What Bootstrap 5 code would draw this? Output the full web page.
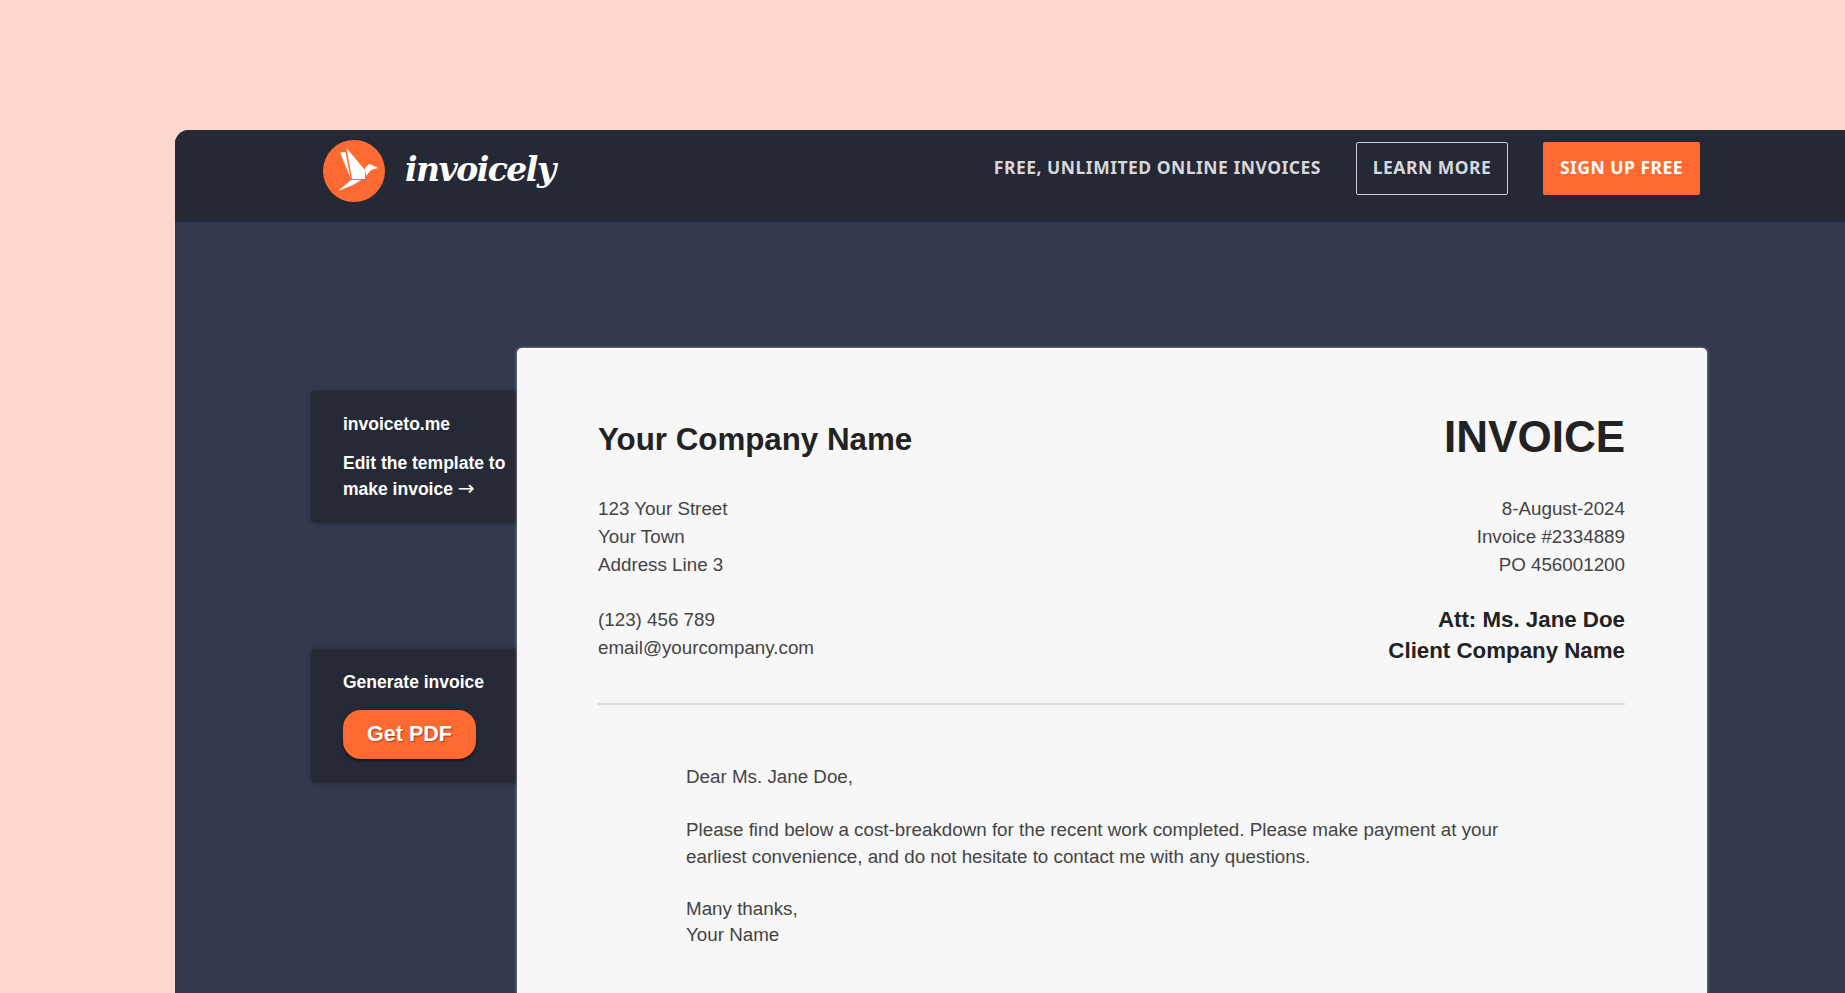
<!doctype html>
<html lang="en"><head><meta charset="utf-8"><title>Invoicely</title>
<link href="https://cdn.jsdelivr.net/npm/bootstrap@5.3.0/dist/css/bootstrap.min.css" rel="stylesheet">
<style>
html,body{height:100%;overflow:hidden}
body{background:#ffd7cc;font-family:"Liberation Sans",Arial,sans-serif;padding:130px 0 0 175px}
.win{background:#343a4d;height:863px;border-radius:14px 0 0 0;overflow:hidden}
.topbar{background:#252936;height:92px;flex:0 0 92px;padding:0 145px 10px 148px}
.brand-text{font-family:"DejaVu Serif",serif;font-style:italic;font-weight:700;font-size:33px;letter-spacing:-1.5px;color:#fff;line-height:1;margin-left:20px;margin-top:-4px}
.navgrp{margin-bottom:6px}
.navtxt,.navbtn{font-family:"Noto Sans",sans-serif;font-weight:700;font-size:17.5px;line-height:1;letter-spacing:.5px}
.navtxt{color:#d6d8dc}
.navbtn{height:53px;display:flex;align-items:center;justify-content:center;border-radius:2px}
.b-learn{width:152px;border:1px solid #c9ccd2;color:#d6d8dc;margin-left:35px}
.b-sign{width:157px;background:#ff6a32;color:#fff;margin-left:35px}
.stage{padding:126px 0 0 136px;flex:1 1 auto;min-height:0}
.side{width:206px;flex:0 0 206px;padding-top:43px;gap:126px}
.sidecard{background:#262a37;border-radius:5px 0 0 5px;box-shadow:0 0 4px rgba(20,22,30,.55);padding:20px 8px 0 32px;color:#fff;font-weight:700;font-size:17.5px;width:206px}
.c1{height:132px}.c2{height:134px}
.sidecard p{margin:0;line-height:26px}
.sidecard .gap1{margin-bottom:13px}
.arw{font-family:"DejaVu Sans",sans-serif;font-weight:400;font-size:20px;line-height:1}
.pdf{display:block;background:#ff6a32;color:#fff;border:0;border-radius:18px;width:133px;height:49px;font-family:"Liberation Sans",Arial,sans-serif;font-weight:700;font-size:21.5px;margin-top:15px;box-shadow:0 2px 3px rgba(0,0,0,.5);text-shadow:1px 1px 1px rgba(80,40,20,.6);padding:0}
.paper{width:1190px;flex:0 0 1190px;background:#f7f7f7;border-radius:5px 5px 0 0;box-shadow:0 0 3px rgba(255,255,255,.55);padding:64px 82px 0 81px;color:#444;font-size:18.8px}
.cname{font-size:31.3px;font-weight:700;color:#222;line-height:36px;margin:10px 0 37px}
.inv{font-size:44px;font-weight:700;color:#222;line-height:50px;margin:0 0 33px}
.ln{line-height:28px}
.ln2{margin-top:27px}
.att{font-size:22.3px;font-weight:700;color:#222;line-height:31px;margin-top:25px}
.rule{border-top:2px solid #dcdcdc;margin:37px 0 58px;opacity:1}
.letter{padding-left:88px;width:940px}
.letter p{margin:0;line-height:27px}
.letter .sp{margin-bottom:26px}
.letter .sgn{line-height:26px}
</style></head><body>
<div class="win d-flex flex-column">
<div class="topbar d-flex align-items-center">
 <svg width="62" height="62" viewBox="0 0 62 62" aria-label="Invoicely logo" class="flex-shrink-0"><circle cx="31" cy="31" r="31" fill="#ff6a32"/><path fill="#fff" d="M17 12.5 22.5 12 27.5 38Z M23.5 8 42 30 42 39 29 39Z M28 40 38 40 30 45 15 51Z M42 28 46 24 49 25 55 28 48 30 43 36Z"/></svg>
 <span class="brand-text">invoicely</span>
 <div class="navgrp d-flex align-items-center ms-auto">
  <span class="navtxt">FREE, UNLIMITED ONLINE INVOICES</span>
  <a class="navbtn b-learn text-decoration-none">LEARN MORE</a>
  <a class="navbtn b-sign text-decoration-none">SIGN UP FREE</a>
 </div>
</div>
<div class="stage d-flex">
 <div class="side d-flex flex-column">
  <div class="sidecard c1"><p class="gap1">invoiceto.me</p><p>Edit the template to make invoice <span class="arw">→</span></p></div>
  <div class="sidecard c2"><p>Generate invoice</p><button class="pdf">Get PDF</button></div>
 </div>
 <div class="paper">
  <div class="d-flex justify-content-between">
   <div>
    <h2 class="cname">Your Company Name</h2>
    <div class="ln">123 Your Street<br>Your Town<br>Address Line 3</div>
    <div class="ln ln2">(123) 456 789<br>email@yourcompany.com</div>
   </div>
   <div class="text-end">
    <h1 class="inv">INVOICE</h1>
    <div class="ln">8-August-2024<br>Invoice #2334889<br>PO 456001200</div>
    <div class="att">Att: Ms. Jane Doe<br>Client Company Name</div>
   </div>
  </div>
  <hr class="rule">
  <div class="letter">
   <p class="sp">Dear Ms. Jane Doe,</p>
   <p class="sp">Please find below a cost-breakdown for the recent work completed. Please make payment at your earliest convenience, and do not hesitate to contact me with any questions.</p>
   <p class="sgn">Many thanks,<br>Your Name</p>
  </div>
 </div>
</div>
</div>
</body></html>
